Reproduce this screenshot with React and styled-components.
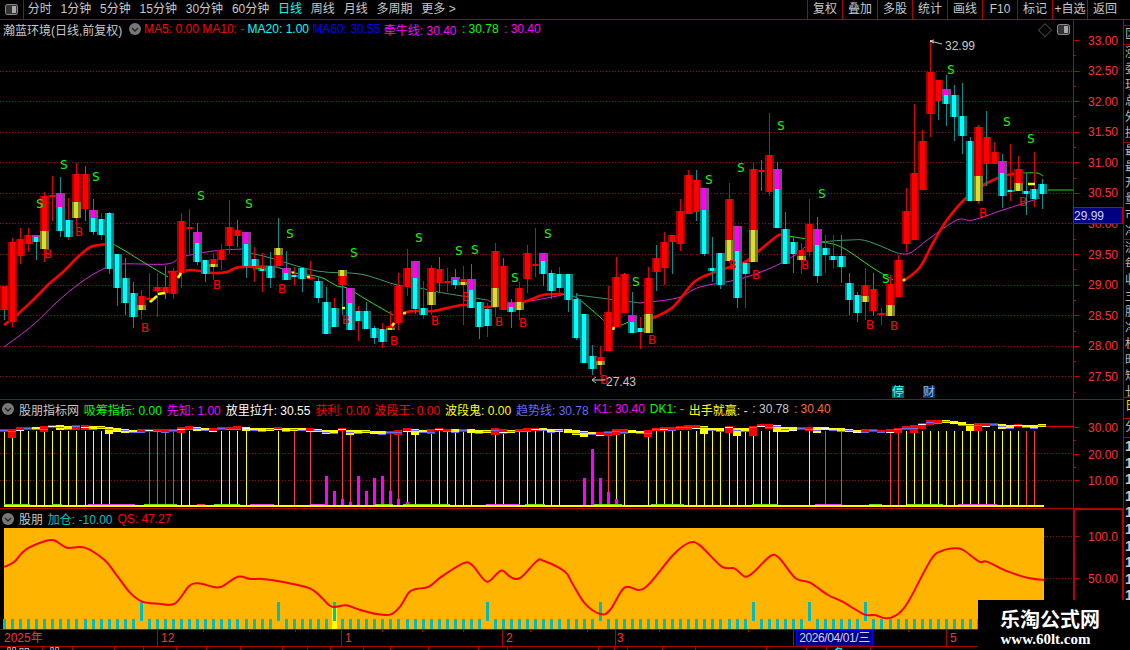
import React from 'react';
import styled, { createGlobalStyle } from 'styled-components';

const RED = '#b00000';

const GlobalStyle = createGlobalStyle`
  html, body {
    margin: 0;
    background: #000;
    overflow: hidden;
  }
  body {
    font: 12px "Liberation Sans", "Noto Sans CJK SC", sans-serif;
    color: #c8c8c8;
  }
`;

const Page = styled.div`
  position: relative;
  display: flex;
  flex-direction: column;
  width: 1130px;
  height: 650px;
  overflow: hidden;
  background: #000;
`;

const Toolbar = styled.div`
  display: flex;
  justify-content: space-between;
  height: 19px;
  border-bottom: 1px solid ${RED};
  line-height: 19px;
`;

const Tabs = styled.div`
  display: flex;
  gap: 8.8px;
`;

const IconCell = styled.div`
  display: flex;
  align-items: center;
  justify-content: center;
  width: 23px;
  margin-right: -5px;
  border-right: 1px solid ${RED};
`;

const Tab = styled.span`
  color: ${({ $active }) => ($active ? '#00ffff' : '#c8c8c8')};
`;

const ToolGroup = styled.div`
  display: flex;
  margin-right: 8px;
`;

const ToolButton = styled.span`
  width: 35px;
  border-left: 1px solid ${RED};
  box-sizing: border-box;
  text-align: center;
`;

const Body = styled.div`
  display: flex;
  flex: 1;
  min-height: 0;
`;

const Charts = styled.div`
  width: 1123px;
`;

const Panel = styled.div`
  display: grid;
  grid-template-columns: 1073px 50px;
  height: ${({ $h }) => $h}px;
  box-sizing: border-box;
  border-bottom: ${({ $line }) => ($line ? `1px solid ${RED}` : 'none')};
`;

const Legend = styled.div`
  display: flex;
  align-items: center;
  justify-content: space-between;
  height: ${({ $h }) => $h}px;
  padding: 0 3px 0 ${({ $pad }) => $pad || 2}px;
  white-space: nowrap;
`;

const LegendItems = styled.div`
  display: flex;
  align-items: center;
  gap: ${({ $gap }) => $gap}px;
`;

const Item = styled.span`
  margin-left: ${({ $shift }) => $shift || 0}px;
  margin-right: ${({ $trail }) => $trail || 0}px;
  color: ${({ $c }) => $c || '#c8c8c8'};
`;

const Marks = styled.div`
  display: flex;
  align-items: center;
  gap: 5px;
  color: #777;
  font-size: 14px;
`;

const Canvas = styled.svg`
  display: block;
  shape-rendering: crispEdges;
`;

const Curve = styled.path`
  fill: none;
  stroke: ${({ $c }) => $c};
  stroke-width: ${({ $w }) => $w || 1}px;
  shape-rendering: geometricPrecision;
  stroke-linejoin: round;
`;

const ChartText = styled.text`
  font-family: "Liberation Sans", sans-serif;
  font-size: 12px;
  fill: ${({ $c }) => $c || '#ff3030'};
  shape-rendering: auto;
`;

const Mark = styled.text`
  font-family: "DejaVu Sans Mono", monospace;
  font-size: 13px;
  text-anchor: middle;
  fill: ${({ $c }) => $c};
`;

const ChartArea = styled.div`
  position: relative;
`;

const NewsBadge = styled.span`
  position: absolute;
  bottom: 1px;
  left: ${({ $x }) => $x}px;
  width: 12px;
  height: 12px;
  line-height: 12px;
  text-align: center;
  color: ${({ $fg }) => $fg};
  background: ${({ $bg }) => $bg};
`;

const DateRow = styled.div`
  position: relative;
  display: flex;
  height: 16px;
  border-bottom: 1px solid ${RED};
  color: #ff3030;
  line-height: 17px;
`;

const Month = styled.div`
  width: ${({ $w }) => $w}px;
  padding-left: ${({ $pad }) => $pad}px;
  box-sizing: border-box;
  border-left: ${({ $first }) => ($first ? 'none' : `1px solid ${RED}`)};
`;

const DateTicks = styled.svg`
  position: absolute;
  top: 0;
  left: 0;
  shape-rendering: crispEdges;
`;

const Cursor = styled.div`
  position: absolute;
  top: 0;
  left: 796px;
  width: 77px;
  height: 16px;
  box-sizing: border-box;
  border: 1px solid #0000ff;
  background: #000080;
  color: #d0d0ff;
  line-height: 15px;
  letter-spacing: -0.4px;
  text-align: center;
  white-space: nowrap;
`;

const FootRow = styled.div`
  display: flex;
  height: 3px;
  overflow: hidden;
  line-height: 14px;
`;

const FootCell = styled.div`
  width: ${({ $w }) => $w}px;
  padding-left: 6px;
  box-sizing: border-box;
  border-right: 1px solid ${RED};
  white-space: nowrap;
  color: ${({ $c }) => $c || '#c8c8c8'};
`;

const Strip = styled.div`
  width: 7px;
  border-left: 1px solid ${RED};
  box-sizing: border-box;
  overflow: hidden;
`;

const StripCell = styled.div`
  height: ${({ $h }) => $h}px;
  box-sizing: border-box;
  overflow: hidden;
  border-bottom: 1px solid ${RED};
  padding-left: 1px;
  line-height: 16px;
  white-space: nowrap;
  color: ${({ $c }) => $c || '#b8b8b8'};
`;

const StripDigit = styled.div`
  height: 16.6px;
  padding-left: 1px;
  font-size: 14px;
  font-weight: 700;
  line-height: 16px;
  color: #c8c8c8;
`;

const Watermark = styled.div`
  position: absolute;
  top: 600px;
  left: 978px;
  display: flex;
  flex-direction: column;
  align-items: center;
  width: 152px;
  height: 50px;
  padding: 7px 8px 0 0;
  box-sizing: border-box;
  background: #000;
  color: #fff;
`;

const WatermarkName = styled.div`
  font: 700 20px/24px "Noto Sans CJK SC", sans-serif;
`;

const WatermarkUrl = styled.div`
  margin-right: 9px;
  font: 700 15px/16px "Liberation Serif", serif;
`;

// candle rows are read off the chart: [colours, wick colour, wick top, wick bottom, ...body edges]
const scaleRows = (base, rows) =>
  rows.map(([kinds, wick, top, bottom, ...edges]) => ({
    kinds,
    wick,
    top: base + top / 3,
    bottom: base + bottom / 3,
    edges: edges.map((y) => base + y / 3),
  }));

const candles = [
  ...scaleRows(130, [
    ['r', 't', 468, 570, 468, 540], ['r', 'r', 325, 590, 336, 576], ['r', 'r', 295, 402, 327, 377],
    ['r', 'r', 295, 365, 316, 342], ['mc', 't', 316, 390, 316, 322, 336], ['ry', 'r', 186, 395, 198, 303, 357],
    ['r', 'r', 138, 273, 195, 201], ['mc', 't', 141, 321, 189, 231, 303], ['c', 'r', 204, 330, 270, 321],
    ['ry', 'r', 99, 290, 132, 216, 264], ['r', 't', 108, 273, 132, 237], ['mc', 't', 207, 315, 240, 264, 306],
    ['c', 'r', 250, 330, 267, 315], ['c', 't', 245, 432, 249, 417], ['c', 't', 372, 528, 372, 474],
    ['c', 't', 385, 555, 444, 519], ['c', 't', 456, 594, 489, 561], ['ry', 'r', 480, 567, 498, 525, 540],
    ['r', 'r', 430, 520, 504, 510], ['r', 'r', 430, 560, 471, 483], ['r', 't', 408, 507, 471, 489],
    ['r', 'r', 415, 507, 426, 492], ['r', 'r', 250, 474, 273, 429], ['r', 'r', 237, 375, 291, 297],
    ['mc', 't', 280, 405, 306, 339, 396], ['c', 't', 390, 456, 390, 432], ['ry', 'r', 370, 450, 387, 402, 411],
    ['r', 'r', 343, 420, 360, 390], ['r', 'r', 210, 372, 291, 348], ['r', 't', 270, 350, 300, 318],
    ['mc', 't', 306, 444, 306, 342, 408], ['c', 'r', 351, 456, 387, 408], ['c', 'r', 370, 486, 418, 424],
    ['c', 't', 366, 474, 408, 444], ['yr', 't', 264, 408, 354, 375, 408], ['mc', 't', 363, 450, 414, 429, 450],
    ['c', 'r', 410, 466, 436, 442], ['c', 't', 414, 486, 414, 447], ['r', 'r', 393, 450, 442, 448],
    ['c', 't', 438, 519, 453, 504], ['c', 't', 471, 612, 516, 612], ['c', 'r', 504, 591, 534, 591],
    ['yr', 't', 420, 555, 420, 438, 466], ['mc', 't', 474, 600, 474, 519, 600], ['c', 'r', 528, 633, 543, 573],
    ['c', 't', 516, 597, 543, 597], ['c', 't', 588, 642, 594, 624], ['c', 'r', 580, 654, 597, 636],
    ['ry', 'r', 543, 600, 588, 594, 600], ['r', 'r', 430, 600, 468, 579],
  ]),
  ...scaleRows(170, [
    ['r', 'r', 238, 378, 294, 352], ['mc', 't', 273, 432, 273, 324, 417], ['c', 'r', 333, 447, 414, 435],
    ['ry', 'r', 285, 435, 294, 366, 405], ['r', 't', 262, 367, 297, 339], ['r', 'r', 294, 365, 334, 340],
    ['mc', 't', 297, 357, 321, 330, 345], ['ry', 'r', 288, 465, 327, 336, 345], ['mc', 't', 282, 414, 327, 360, 414],
    ['c', 't', 396, 507, 396, 471], ['c', 'r', 400, 501, 417, 468], ['ry', 'r', 220, 440, 243, 354, 411],
    ['r', 't', 264, 420, 288, 420], ['mc', 't', 387, 474, 399, 411, 426], ['ry', 'r', 336, 450, 354, 396, 420],
    ['r', 'r', 225, 370, 250, 327], ['r', 'r', 174, 320, 283, 289], ['mc', 't', 250, 348, 250, 273, 312],
    ['c', 't', 300, 387, 309, 363], ['c', 'r', 292, 375, 312, 354], ['c', 't', 312, 426, 312, 390],
    ['c', 't', 370, 510, 387, 504], ['c', 't', 432, 579, 432, 579], ['c', 't', 525, 615, 558, 597],
    ['ry', 'r', 528, 615, 561, 573, 585], ['r', 'r', 348, 543, 426, 543], ['r', 'r', 262, 471, 321, 471],
    ['r', 't', 310, 429, 312, 429], ['mc', 't', 366, 489, 435, 456, 489], ['c', 'r', 440, 537, 474, 486],
    ['ry', 'r', 292, 489, 324, 432, 489], ['r', 't', 225, 363, 264, 306], ['r', 'r', 186, 345, 216, 294],
    ['r', 't', 195, 312, 195, 216], ['r', 'r', 87, 243, 123, 222], ['r', 'r', 0, 132, 15, 132],
    ['r', 't', 0, 153, 30, 126], ['mc', 't', 54, 258, 54, 120, 252], ['c', 't', 201, 336, 294, 303],
    ['c', 't', 249, 357, 249, 345], ['ry', 'r', 39, 280, 87, 210, 273], ['mc', 't', 168, 414, 168, 243, 384],
  ]),
  ...scaleRows(30, [
    ['c', 'r', 699, 833, 699, 732], ['ry', 'r', 396, 696, 417, 600, 696], ['r', 't', 390, 483, 421, 427],
    ['r', 'r', 249, 498, 375, 486], ['mc', 't', 396, 594, 417, 477, 594], ['c', 't', 546, 702, 597, 702],
    ['c', 't', 620, 729, 636, 672], ['ry', 'r', 640, 732, 660, 678, 690], ['r', 'r', 507, 680, 582, 666],
    ['mc', 't', 561, 759, 597, 645, 738], ['c', 'r', 615, 729, 654, 675], ['c', 'r', 615, 715, 678, 690],
    ['c', 't', 615, 760, 678, 711], ['c', 't', 729, 855, 759, 810], ['c', 't', 785, 876, 795, 849],
    ['ry', 'r', 714, 870, 765, 798, 816], ['r', 't', 730, 858, 777, 843], ['r', 'r', 835, 885, 850, 856],
    ['ry', 'r', 735, 858, 762, 825, 858], ['r', 'r', 675, 801, 690, 801], ['r', 'r', 474, 666, 543, 642],
    ['r', 'r', 222, 630, 429, 630], ['r', 'r', 300, 480, 333, 480], ['r', 'r', 30, 321, 126, 252],
    ['r', 't', 150, 270, 150, 213], ['mc', 't', 135, 288, 177, 195, 222], ['c', 't', 165, 333, 195, 261],
    ['c', 't', 160, 372, 258, 318], ['c', 't', 320, 513, 333, 513], ['ry', 'r', 285, 522, 291, 438, 513],
    ['r', 't', 243, 468, 321, 402], ['r', 'r', 336, 402, 366, 402], ['mc', 't', 372, 534, 393, 429, 498],
    ['c', 'r', 342, 513, 480, 486], ['ry', 'r', 378, 483, 417, 459, 483], ['c', 't', 430, 555, 483, 492],
    ['c', 'r', 366, 531, 477, 507], ['c', 't', 447, 537, 462, 492],
  ]),
];

// edge colour, core colour, core width
const BODY = {
  r: ['#a00000', '#ff0000', 5],
  c: ['#008080', '#00ffff', 4],
  m: ['#884488', '#ff00ff', 4],
  y: ['#808020', '#dcdc30', 4],
};
const WICK = { r: '#e00000', t: '#009090' };

const slotX = (i) => Math.round(4 + i * 8.05);

// catmull-rom through the read-off points, the originals are smooth lines
const toPath = (pts) => {
  let d = `M${pts[0].join(' ')}`;
  for (let i = 0; i < pts.length - 1; i++) {
    const p0 = pts[i - 1] || pts[i];
    const p1 = pts[i];
    const p2 = pts[i + 1];
    const p3 = pts[i + 2] || p2;
    const c1 = [p1[0] + (p2[0] - p0[0]) / 6, p1[1] + (p2[1] - p0[1]) / 6];
    const c2 = [p2[0] - (p3[0] - p1[0]) / 6, p2[1] - (p3[1] - p1[1]) / 6];
    d += `C${c1.join(' ')} ${c2.join(' ')} ${p2.join(' ')}`;
  }
  return d;
};

const fastRed = [
  [[4, 325], [17, 315], [33, 300], [50, 283], [63, 272], [80, 255], [93, 246], [113, 244]],
  [[168, 272], [180, 272], [192, 270], [213, 273], [227, 272], [240, 267], [277, 267]],
  [[393, 325], [407, 312], [433, 311], [463, 305], [487, 307], [523, 302], [543, 295], [563, 294]],
  [[653, 318], [673, 307], [693, 283], [707, 275], [727, 268], [745, 262], [760, 250], [777, 236], [782, 235]],
  [[905, 280], [920, 267], [933, 243], [947, 220], [967, 197], [987, 183], [1007, 175], [1023, 173]],
];
const fastGreen = [
  [[113, 244], [127, 252], [143, 262], [168, 277]],
  [[277, 267], [295, 273], [320, 277], [337, 286], [347, 288], [367, 300], [393, 315]],
  [[253, 269], [267, 268]],
  [[563, 294], [577, 298], [600, 317], [613, 327], [633, 320]],
  [[782, 235], [823, 242], [843, 248], [873, 268], [893, 280]],
  [[1023, 173], [1037, 173], [1043, 176]],
  [[1048, 190], [1073, 190]],
];
const fastYellow = [
  [[150, 302], [157, 296]],
  [[158, 294], [165, 293]],
  [[178, 278], [181, 273]],
  [[292, 273], [294, 272]],
  [[307, 277], [310, 277]],
  [[342, 308], [345, 308]],
  [[392, 326], [394, 323]],
  [[403, 313], [406, 313]],
  [[613, 330], [614, 327]],
  [[903, 281], [905, 279]],
  [[1028, 184], [1035, 184]],
];
const slowMagenta = [
  [[4, 347], [33, 325], [57, 302], [80, 283], [103, 269], [122, 264], [167, 264], [182, 257], [213, 251], [242, 249]],
  [[487, 300], [495, 302], [523, 302], [567, 294]],
  [[640, 303], [677, 298], [700, 287], [740, 279], [773, 267], [795, 255], [805, 247]],
  [[897, 253], [910, 253], [930, 238], [957, 220], [973, 220], [1003, 210], [1040, 198]],
];
const slowGreen = [
  [[242, 249], [250, 253], [267, 257], [317, 271], [360, 274], [397, 285], [420, 288], [438, 292], [487, 300]],
  [[577, 295], [640, 303]],
  [[805, 247], [823, 242], [850, 240], [867, 241], [897, 253]],
];

const sells = [
  [40, 203], [64, 164], [96, 176], [201, 195], [249, 203], [290, 233], [354, 252], [419, 237], [459, 250],
  [475, 249], [515, 277], [548, 233], [636, 281], [709, 179], [741, 167], [781, 125], [822, 193], [886, 278],
  [951, 69], [1007, 121], [1031, 138],
];
const buys = [
  [48, 253], [79, 231], [145, 327], [217, 284], [282, 288], [346, 319], [394, 340], [435, 320], [466, 296],
  [499, 321], [523, 322], [604, 379], [652, 339], [733, 264], [756, 274], [805, 264], [870, 324], [894, 325],
  [983, 212], [1023, 201],
];

const gridRows = [0, 1, 2, 3, 4, 5, 6, 7, 8, 9, 10, 11].map((k) => 40 + k * 30.58);
const priceLabels = ['33.00', '32.50', '32.00', '31.50', '31.00', '30.50', '30.00', '29.50', '29.00', '28.50', '28.00', '27.50'];

const MainChart = () => (
  <Canvas width="1073" height="361" viewBox="0 38 1073 361">
    {gridRows.slice(1).map((y) => (
      <line key={y} x1="0" x2="1073" y1={Math.round(y)} y2={Math.round(y)} stroke="#b00000" strokeDasharray="1 2" />
    ))}
    {slowMagenta.map((pts, i) => <Curve key={i} d={toPath(pts)} $c="#e020e0" />)}
    {slowGreen.map((pts, i) => <Curve key={i} d={toPath(pts)} $c="#3c9a70" />)}
    {fastGreen.map((pts, i) => <Curve key={i} d={toPath(pts)} $c="#20e020" />)}
    {fastRed.map((pts, i) => <Curve key={i} d={toPath(pts)} $c="#ff0000" $w={2.6} />)}
    {candles.map((c, i) => {
      const x = slotX(i);
      return (
        <g key={i}>
          <rect x={x} y={c.top} width="1" height={c.bottom - c.top} fill={WICK[c.wick]} />
          {[...c.kinds].map((kind, k) => {
            const h = Math.max(c.edges[k + 1] - c.edges[k], 1);
            const [edge, core, coreW] = BODY[kind];
            return (
              <g key={k}>
                <rect x={x - 4} y={c.edges[k]} width="9" height={h} fill={edge} />
                <rect x={x - 2} y={c.edges[k]} width={coreW} height={h} fill={core} />
              </g>
            );
          })}
        </g>
      );
    })}
    {fastYellow.map((pts, i) => <Curve key={i} d={toPath(pts)} $c="#ffff00" $w={2.5} />)}
    {sells.map(([x, y]) => <Mark key={x} x={x} y={y + 5} $c="#00ff00">S</Mark>)}
    {buys.map(([x, y]) => <Mark key={x} x={x} y={y + 5} $c="#ff0000">B</Mark>)}
    <Curve d="M930 41L934 40M930 41L934 43M930 41L942 44" $c="#c8c8c8" />
    <ChartText x="945" y="50" $c="#c8c8c8">32.99</ChartText>
    <Curve d="M592 380L605 380M592 380L596 377M592 380L596 383" $c="#c8c8c8" />
    <ChartText x="606" y="386" $c="#c8c8c8">27.43</ChartText>
  </Canvas>
);

const MainAxis = () => (
  <Canvas width="50" height="379" viewBox="1073 20 50 379">
    <rect x="1073" y="20" width="1" height="379" fill="#c00000" />
    {gridRows.map((y, i) => (
      <g key={y}>
        <rect x="1073" y={Math.round(y)} width="6" height="1" fill="#c00000" />
        <rect x="1073" y={Math.round(y + 15.3)} width="3" height="1" fill="#c00000" />
        <ChartText x="1088" y={y + 4.5}>{priceLabels[i]}</ChartText>
      </g>
    ))}
    <rect x="1073.5" y="207.5" width="49" height="16" fill="#000080" stroke="#c00000" />
    <ChartText x="1074" y="220" $c="#d0d0ff">29.99</ChartText>
  </Canvas>
);

const yellowLines = [
  0, 1, 2, 3, 4, 5, 6, 7, 8, 9, 10, 11, 12, 13, 22, 23, 27, 28, 29, 30, 34, 50, 51, 53, 54, 55, 56, 57, 58, 61, 62,
  64, 65, 66, 67, 68, 69, 76, 77, 80, 81, 82, 83, 84, 85, 86, 87, 88, 89, 90, 91, 92, 93, 94, 95, 96, 100, 112, 113,
  114, 115, 116, 117, 118, 119, 120, 121, 122, 123, 124, 125, 126,
];
const redLines = [18, 19, 20, 21, 36, 38, 42, 43, 48, 49, 75, 102, 104, 110, 111, 127, 128];
const volumeBars = [
  [326, 476], [334, 491], [342, 499], [350, 502], [358, 476], [366, 491], [374, 478], [382, 476], [390, 491],
  [398, 499], [407, 502], [584, 478], [592, 449], [600, 478], [608, 492], [616, 499],
];
const baseRuns = [
  [4, 30, '#60e010'], [52, 62, '#60e010'], [88, 135, '#e040e0'], [144, 177, '#60e010'], [197, 205, '#ff3030'],
  [214, 240, '#60e010'], [250, 274, '#e040e0'], [310, 325, '#e040e0'], [375, 393, '#60e010'], [403, 450, '#60e010'],
  [486, 520, '#e040e0'], [525, 545, '#60e010'], [594, 622, '#60e010'], [651, 684, '#60e010'], [752, 778, '#60e010'],
  [815, 842, '#e040e0'], [869, 882, '#60e010'], [907, 943, '#60e010'], [958, 997, '#e040e0'],
];

// same closes as the main chart, squeezed onto the 0-30 scale
const bandY = (y) => 427 - (33 - (y - 40) / 61.2 - 30) * 2.67;

const StrengthChart = () => (
  <Canvas width="1073" height="90" viewBox="0 418 1073 90">
    <line x1="1044" x2="1073" y1="426.5" y2="426.5" stroke="#e00000" />
    {[453, 480].map((y) => (
      <line key={y} x1="0" x2="1073" y1={y} y2={y} stroke="#b00000" strokeDasharray="1 2" />
    ))}
    {yellowLines.map((i) => <rect key={i} x={slotX(i)} y="431" width="1" height="74" fill="#ffff00" />)}
    {redLines.map((i) => <rect key={i} x={slotX(i)} y="431" width="1" height="74" fill="#ff3838" />)}
    {candles.map((c, i) => {
      const up = c.kinds.includes('r') && !c.kinds.includes('c');
      const mid = (c.edges[0] + c.edges[c.edges.length - 1]) / 2;
      const span = c.edges[c.edges.length - 1] - c.edges[0];
      const y = Math.round(bandY(mid));
      const h = Math.max(3, Math.round(span / 10) + 1);
      return (
        <g key={i}>
          <rect x={slotX(i) - 4} y={y - 1} width="8" height={h} fill={up ? '#ff0000' : '#ffff00'} />
          <rect x={slotX(i) - 4} y={y + (i % 3)} width="8" height="1" fill={i % 4 === 2 ? '#ffffff' : '#6a6aff'} />
        </g>
      );
    })}
    {volumeBars.map(([x, y]) => <rect key={x} x={x - 1} y={y} width="3" height={505 - y} fill="#ff00ff" />)}
    <rect x="4" y="505" width="1040" height="2" fill="#ffff00" />
    {baseRuns.map(([a, b, c]) => <rect key={a} x={a} y="504" width={b - a} height="1" fill={c} />)}
  </Canvas>
);

const StrengthAxis = () => (
  <Canvas width="50" height="108" viewBox="1073 400 50 108">
    <rect x="1073" y="400" width="1" height="108" fill="#c00000" />
    {[[427, '30.00'], [454, '20.00'], [480, '10.00']].map(([y, label]) => (
      <g key={y}>
        <rect x="1073" y={y} width="6" height="1" fill="#c00000" />
        <ChartText x="1088" y={y + 4.5}>{label}</ChartText>
      </g>
    ))}
    <rect x="1073" y="440" width="3" height="1" fill="#c00000" />
    <rect x="1073" y="467" width="3" height="1" fill="#c00000" />
  </Canvas>
);

const sw = (pts) => pts.map(([x, y]) => [x / 2.775, 505 + y / 3]);
const sw2 = (pts) => pts.map(([x, y]) => [565 + x / 2.775, 505 + y / 3]);
const qsCurve = [
  ...sw([
    [12, 186], [40, 170], [60, 145], [80, 128], [120, 110], [150, 106], [185, 128], [235, 128], [290, 165], [320, 205],
    [360, 262], [395, 290], [440, 296], [485, 296], [525, 243], [550, 235], [590, 245], [615, 245], [660, 215], [695, 222],
    [730, 222], [790, 232], [860, 250], [890, 275], [920, 305], [960, 301], [1000, 315], [1050, 328], [1085, 328],
    [1110, 305], [1135, 262], [1155, 252], [1190, 245], [1225, 215], [1285, 175], [1310, 180], [1350, 230], [1380, 205],
    [1395, 197], [1420, 218], [1445, 218], [1490, 168], [1510, 168],
  ]),
  ...sw2([
    [0, 200], [20, 235], [55, 295], [98, 327], [125, 315], [165, 248], [205, 255], [235, 235], [300, 150], [345, 113],
    [375, 122], [435, 185], [470, 190], [500, 215], [525, 200], [570, 153], [595, 160], [640, 220], [680, 233], [730, 270],
    [770, 290], [830, 328], [860, 330], [890, 340], [920, 330], [950, 295], [1015, 165], [1045, 138], [1085, 130],
    [1105, 135], [1150, 170], [1170, 170], [1230, 200], [1290, 220], [1330, 225],
  ]),
];
const tallTicks = [17, 34, 41, 60, 74, 93, 100, 107];

const QsChart = () => (
  <Canvas width="1073" height="102" viewBox="0 528 1073 102">
    <rect x="4" y="528" width="1040" height="102" fill="#ffb400" />
    {[536, 578].map((y) => (
      <line key={y} x1="1044" x2="1073" y1={y} y2={y} stroke="#b00000" strokeDasharray="1 2" />
    ))}
    <rect x={slotX(41) - 2} y="608" width="5" height="21" fill="#ffff00" />
    {candles.map((_, i) =>
      tallTicks.includes(i) ? (
        <rect key={i} x={slotX(i) - 1} y="602" width="3" height="19" fill="#00bcbc" />
      ) : (
        <rect key={i} x={slotX(i) - 1} y="619" width="3" height="10" fill="#00bcbc" />
      ),
    )}
    <Curve d={toPath(qsCurve)} $c="#ff0000" $w={2} />
    <rect x="0" y="629" width="1073" height="1" fill="#b00000" />
  </Canvas>
);

const QsAxis = () => (
  <Canvas width="50" height="121" viewBox="1073 509 50 121">
    <rect x="1073" y="509" width="2" height="121" fill="#c00000" />
    <rect x="1073" y="508" width="50" height="2" fill="#c00000" />
    <rect x="1122" y="509" width="1" height="121" fill="#c00000" />
    {[[536, '100.0'], [578, '50.00']].map(([y, label]) => (
      <g key={y}>
        <rect x="1073" y={y} width="6" height="1" fill="#c00000" />
        <ChartText x="1088" y={y + 4.5}>{label}</ChartText>
      </g>
    ))}
    <rect x="1073" y="558" width="3" height="1" fill="#c00000" />
  </Canvas>
);

const PanelIcon = () => (
  <svg width="13" height="11" viewBox="0 0 13 11">
    <rect x="0.5" y="0.5" width="12" height="10" rx="2" fill="#333" stroke="#8a8a8a" />
    <rect x="7" y="2" width="4" height="7" fill="#a8a8a8" />
  </svg>
);

const ChevronDot = () => (
  <svg width="12" height="12" viewBox="0 0 12 12">
    <circle cx="6" cy="6" r="6" fill="#787878" />
    <path d="M3 5L6 8L9 5" fill="none" stroke="#222" strokeWidth="1.4" />
  </svg>
);

const months = [
  { w: 157, pad: 4, label: '2025年', first: true },
  { w: 184, pad: 3, label: '12' },
  { w: 161, pad: 3, label: '1' },
  { w: 113, pad: 3, label: '2' },
  { w: 178, pad: 1, label: '3' },
  { w: 153, pad: 0, label: '' },
  { w: 127, pad: 3, label: '5' },
];

const smallTicks = [203, 249, 295, 382, 422, 463, 530, 587, 659, 748, 908];

const footCells = [
  { w: 43, t: '股朋' }, { w: 30, t: '股' }, { w: 42 }, { w: 29 }, { w: 33 }, { w: 30 }, { w: 34 }, { w: 42 },
  { w: 25 }, { w: 23 }, { w: 33 }, { w: 27 }, { w: 38 }, { w: 50 }, { w: 29 }, { w: 91 }, { w: 16 }, { w: 13 },
  { w: 35 }, { w: 33 }, { w: 71 }, { w: 40 }, { w: 20 }, { w: 13, t: '条', c: '#00ffff' }, { w: 31 },
];

const stripRows = [
  { h: 6 },
  { h: 19, t: '区' },
  { h: 98, t: ['涨', '委', '现', '总', '外', '换', '今'] },
  { h: 97, t: ['最', '最', '开', '量', '市', '净'] },
  { h: 158, t: ['流', '每', '收', '主', '股', '净', '权', '时', '短', '长'] },
  { h: 21, t: '日', c: '#e0e020' },
  { h: 19, t: '分' },
];

const Side = () => (
  <Strip>
    {stripRows.map((row, i) => (
      <StripCell key={i} $h={row.h} $c={row.c}>
        {Array.isArray(row.t) ? row.t.map((ch, k) => <div key={k}>{ch}</div>) : row.t}
      </StripCell>
    ))}
    {Array.from({ length: 10 }, (_, i) => <StripDigit key={i}>1</StripDigit>)}
  </Strip>
);

const App = () => (
  <Page>
    <GlobalStyle />
    <Toolbar>
      <Tabs>
        <IconCell><PanelIcon /></IconCell>
        {['分时', '1分钟', '5分钟', '15分钟', '30分钟', '60分钟'].map((t) => <Tab key={t}>{t}</Tab>)}
        <Tab $active>日线</Tab>
        {['周线', '月线', '多周期', '更多 >'].map((t) => <Tab key={t}>{t}</Tab>)}
      </Tabs>
      <ToolGroup>
        {['复权', '叠加', '多股', '统计', '画线', 'F10', '标记', '+自选', '返回'].map((t) => (
          <ToolButton key={t}>{t}</ToolButton>
        ))}
      </ToolGroup>
    </Toolbar>
    <Body>
      <Charts>
        <Panel $h={380} $line>
          <ChartArea>
            <Legend $h={18} $pad={3}>
              <LegendItems $gap={3.4}>
                <Item $trail={3}>瀚蓝环境(日线,前复权)</Item>
                <ChevronDot />
                <Item $c="#ff0000">MA5: 0.00</Item>
                <Item $c="#ff0000">MA10: -</Item>
                <Item $c="#00ffff">MA20: 1.00</Item>
                <Item $c="#0000ff">MA60: 30.55</Item>
                <Item $c="#ff00ff">牵牛线: 30.40</Item>
                <Item $c="#00ff00" $shift={2}>: 30.78</Item>
                <Item $c="#ff00ff" $shift={2}>: 30.40</Item>
              </LegendItems>
              <Marks>
                <span>◇</span>
                <PanelIcon />
              </Marks>
            </Legend>
            <MainChart />
            <NewsBadge $x={892} $fg="#40ffff" $bg="#006666">停</NewsBadge>
            <NewsBadge $x={923} $fg="#80c0ff" $bg="#103060">财</NewsBadge>
          </ChartArea>
          <MainAxis />
        </Panel>
        <Panel $h={109} $line>
          <ChartArea>
            <Legend $h={18} $pad={2}>
              <LegendItems $gap={4.9}>
                <ChevronDot />
                <Item>股朋指标网</Item>
                <Item $c="#00ff00">吸筹指标: 0.00</Item>
                <Item $c="#ff00ff">先知: 1.00</Item>
                <Item $c="#ffffff">放里拉升: 30.55</Item>
                <Item $c="#ff0000">获利: 0.00</Item>
                <Item $c="#ff0000">波段王: 0.00</Item>
                <Item $c="#ffff00">波段鬼: 0.00</Item>
                <Item $c="#6868ff">趋势线: 30.78</Item>
                <Item $c="#ff00ff">K1: 30.40</Item>
                <Item $c="#00ff00">DK1: -</Item>
                <Item $c="#ffff00">出手就赢: -</Item>
                <Item>: 30.78</Item>
                <Item $c="#ff6a30">: 30.40</Item>
              </LegendItems>
            </Legend>
            <StrengthChart />
          </ChartArea>
          <StrengthAxis />
        </Panel>
        <Panel $h={121}>
          <ChartArea>
            <Legend $h={19} $pad={2}>
              <LegendItems $gap={4.9}>
                <ChevronDot />
                <Item>股朋</Item>
                <Item $c="#00c0c0">加仓: -10.00</Item>
                <Item $c="#ff0000">QS: 47.27</Item>
              </LegendItems>
            </Legend>
            <QsChart />
          </ChartArea>
          <QsAxis />
        </Panel>
        <DateRow>
          {months.map((m) => (
            <Month key={m.w} $w={m.w} $pad={m.pad} $first={m.first}>{m.label}</Month>
          ))}
          <DateTicks width="1073" height="3" viewBox="0 0 1073 3">
            {smallTicks.map((x) => <rect key={x} x={x} y="0" width="1" height="2" fill={RED} />)}
          </DateTicks>
          <Cursor>2026/04/01/三</Cursor>
        </DateRow>
        <FootRow>
          {footCells.map((c, i) => (
            <FootCell key={i} $w={c.w} $c={c.c}>{c.t}</FootCell>
          ))}
        </FootRow>
      </Charts>
      <Side />
    </Body>
    <Watermark>
      <WatermarkName>乐淘公式网</WatermarkName>
      <WatermarkUrl>www.60lt.com</WatermarkUrl>
    </Watermark>
  </Page>
);

export default App;
